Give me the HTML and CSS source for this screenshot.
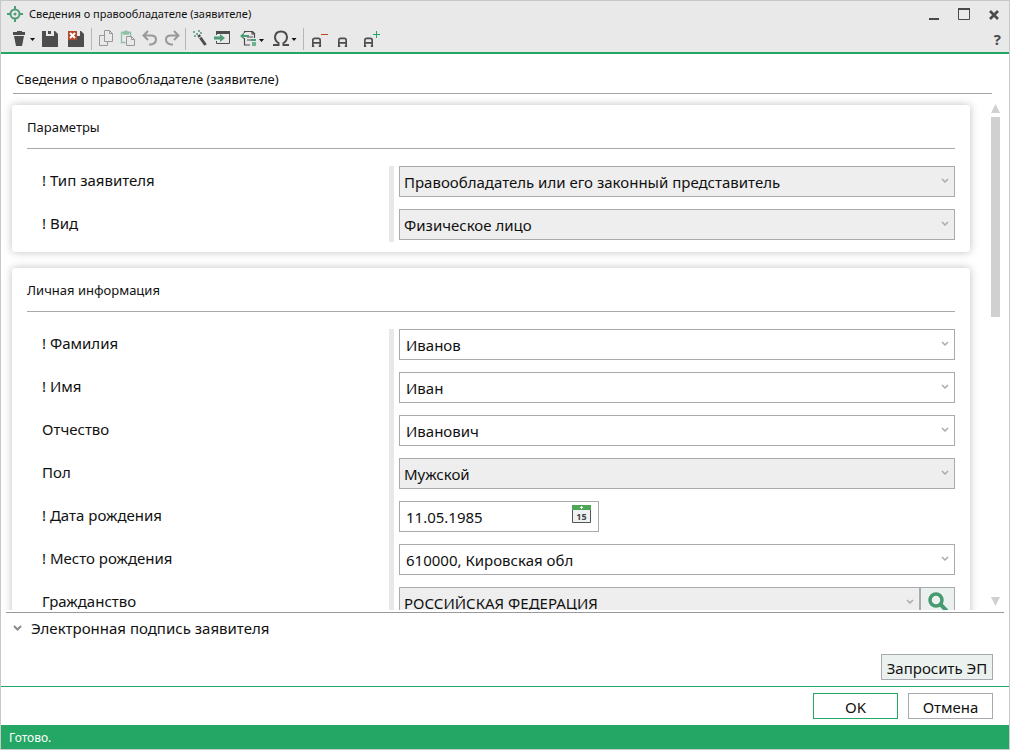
FILE: index.html
```html
<!doctype html>
<html lang="ru">
<head>
    <title>Сведения о правообладателе (заявителе)</title>
    <meta charset="utf-8">
    <meta name="viewport" content="width=device-width, initial-scale=1">
    <link rel="stylesheet" href="styles.css">
</head>
<body>

  <!-- shared icons -->
  <svg class="defs" width="0" height="0" aria-hidden="true">
    <symbol id="chevron" viewBox="0 0 8 6">
      <path d="M1 1l3 3 3-3" fill="none" stroke="currentColor" stroke-width="1.5"/>
    </symbol>
    <symbol id="letter-box" viewBox="0 0 12 12">
      <path d="M2 11V4q0-2 2-2h4q2 0 2 2v7M2 7h8M1 10.500h2.500M8.500 10.500H11" fill="none" stroke="#4d4d4d" stroke-width="1.800"/>
    </symbol>
  </svg>

  <div class="window">

    <!-- title bar -->
    <header class="header">
      <div class="titlebar">
        <svg class="logo" width="16" height="16" viewBox="0 0 16 16">
          <circle cx="8" cy="8" r="4.500" fill="none" stroke="#4f9c78" stroke-width="2"/>
          <path d="M8 0v4M8 12v4M0 8h4M12 8h4" stroke="#4f9c78" stroke-width="2"/>
          <circle cx="8" cy="8" r="1.500" fill="#4f9c78"/>
        </svg>
        <span class="titlebar-text">Сведения о правообладателе (заявителе)</span>
        <button class="icon-btn" aria-label="Свернуть">
          <svg width="12" height="14" viewBox="0 0 12 14"><path d="M1 12h10" stroke="#4a4a4a" stroke-width="2"/></svg>
        </button>
        <button class="icon-btn" aria-label="Развернуть">
          <svg width="12" height="14" viewBox="0 0 12 14"><path d="M0 2h12" stroke="#4a4a4a" stroke-width="2"/><path d="M.5 2v10.500h11V2" fill="none" stroke="#4a4a4a"/></svg>
        </button>
        <button class="icon-btn" aria-label="Закрыть">
          <svg width="12" height="14" viewBox="0 0 12 14"><path d="M2 4l8 8M10 4l-8 8" stroke="#4a4a4a" stroke-width="2.600"/></svg>
        </button>
      </div>

      <!-- toolbar -->
      <div class="toolbar">
        <button class="icon-btn" aria-label="Удалить">
          <svg width="23" height="18" viewBox="0 0 23 18"><path d="M5 1h5v1h3v3H1V2h4z" fill="#4d4d4d"/><path d="M2 6h10l-2 10H4z" fill="#4d4d4d"/><path d="M18 8h5l-2.500 3z" fill="#111"/></svg>
        </button>
        <button class="icon-btn" aria-label="Сохранить">
          <svg width="19" height="16" viewBox="0 0 19 16"><path d="M0 0h13l3 3v13H0z" fill="#4d4d4d"/><path d="M4 0h8v5H4z" fill="#e9e9e9"/><path d="M6 0h3v3H6z" fill="#4d4d4d"/></svg>
        </button>
        <button class="icon-btn" aria-label="Сохранить и закрыть">
          <svg width="16" height="16" viewBox="0 0 16 16"><path d="M0 0h13l3 3v13H0z" fill="#4d4d4d"/><path d="M9 0h3v5H9z" fill="#e9e9e9"/><path d="M0 0h9v9H0z" fill="#b7492b"/><path d="M2 2l5 5M7 2L2 7" stroke="#fff" stroke-width="2"/></svg>
        </button>
        <span class="separator"></span>
        <button class="icon-btn" aria-label="Копировать">
          <svg width="15" height="18" viewBox="0 0 15 18"><path d="M5.500.5h5l3 3v8h-8zM10.500.5v3h3" fill="#e9e9e9" stroke="#999"/><path d="M5 5.500H.5v10h8V12" fill="none" stroke="#999"/></svg>
        </button>
        <button class="icon-btn" aria-label="Вставить">
          <svg width="14" height="18" viewBox="0 0 14 18"><path d="M4.500 12.500h-4v-10h9V6M2.500 4V2h1.500q1-2 2 0H7.500v2z" fill="none" stroke="#8ec0a5" stroke-width="1.300"/><path d="M5.500 6.500h5l3 3v6h-8zM10.500 6.500v3h3" fill="#e9e9e9" stroke="#999"/></svg>
        </button>
        <button class="icon-btn" aria-label="Отменить">
          <svg width="15" height="18" viewBox="0 0 15 18"><path d="M6 1L1.500 5.500 6 10M2 5.500h7q5 0 5 4t-5 5H7" fill="none" stroke="#999" stroke-width="2"/></svg>
        </button>
        <button class="icon-btn" aria-label="Повторить">
          <svg width="14" height="18" viewBox="0 0 14 18"><path d="M10 1l4.500 4.500L10 10M14 5.500H7q-5 0-5 4t5 5h2" fill="none" stroke="#999" stroke-width="2"/></svg>
        </button>
        <span class="separator"></span>
        <button class="icon-btn" aria-label="Мастер">
          <svg width="14" height="18" viewBox="0 0 14 18"><path d="M5.500 5L12.500 15" stroke="#4d4d4d" stroke-width="3"/><path d="M6 8l3-2" stroke="#e9e9e9"/><path d="M0 2h2M3 4h2M5 1h2M1 6h2M7 3h2" stroke="#4f9c78" stroke-width="1.500"/></svg>
        </button>
        <button class="icon-btn" aria-label="Загрузить">
          <svg width="19" height="18" viewBox="0 0 19 18"><path d="M2.500 5V1.500h13v12h-13V11" fill="none" stroke="#4d4d4d"/><path d="M2 1h14v3H2z" fill="#4d4d4d"/><path d="M0 6.500h6V4l5 4-5 4V9.500H0z" fill="#4f9c78"/></svg>
        </button>
        <button class="icon-btn" aria-label="Импорт">
          <svg width="26" height="18" viewBox="0 0 26 18"><path d="M4.500 3V1.500h8l2 2V8M4.500 8v7H10M12 2v2h2M7 7h6M7 10h4" fill="none" stroke="#4d4d4d" stroke-width="1.200"/><path d="M0 6l4-3.500v2.500h5v2H4v2.500z" fill="#4f9c78"/><path d="M11 9h5v2h-5z" fill="#4f9c78"/><path d="M12 12h4v4h-4z" fill="#6fb48f"/><path d="M19 9h5l-2.500 3z" fill="#111"/></svg>
        </button>
        <button class="icon-btn" aria-label="Символ">
          <svg width="23" height="18" viewBox="0 0 23 18"><path d="M0 15h5.500v-2Q2 11 2 7 2.500 1.500 8 1.500T14 7Q14 11 10.500 13v2H16" fill="none" stroke="#4d4d4d" stroke-width="2"/><path d="M18.500 8h5L21 11z" fill="#111"/></svg>
        </button>
        <span class="separator"></span>
        <button class="icon-btn sized" aria-label="Уменьшить блок">
          <svg width="17" height="18" viewBox="0 0 17 18"><use href="#letter-box" y="6" width="11" height="12"/><path d="M10 4.500h7" stroke="#c0451f"/></svg>
        </button>
        <button class="icon-btn sized" aria-label="Блок">
          <svg width="17" height="18" viewBox="0 0 17 18"><use href="#letter-box" y="6" width="11" height="12"/></svg>
        </button>
        <button class="icon-btn sized" aria-label="Увеличить блок">
          <svg width="17" height="18" viewBox="0 0 17 18"><use href="#letter-box" y="6" width="11" height="12"/><path d="M10 4.500h7M13.500 1v7" stroke="#24a664"/></svg>
        </button>
        <button class="icon-btn help">?</button>
      </div>
    </header>

    <h1 class="page-title">Сведения о правообладателе (заявителе)</h1>

    <!-- form -->
    <main class="content">
      <div class="cards">

        <section class="card">
          <h2 class="card-title">Параметры</h2>
          <div class="row">
            <label class="label" for="type">! Тип заявителя</label>
            <div class="field gray">
              <select id="type"><option>Правообладатель или его законный представитель</option></select>
              <svg class="arrow"><use href="#chevron"/></svg>
            </div>
          </div>
          <div class="row">
            <label class="label" for="kind">! Вид</label>
            <div class="field gray">
              <select id="kind"><option>Физическое лицо</option></select>
              <svg class="arrow"><use href="#chevron"/></svg>
            </div>
          </div>
        </section>

        <section class="card">
          <h2 class="card-title">Личная информация</h2>
          <div class="row">
            <label class="label" for="surname">! Фамилия</label>
            <div class="field">
              <input type="text" id="surname" value="Иванов">
              <svg class="arrow"><use href="#chevron"/></svg>
            </div>
          </div>
          <div class="row">
            <label class="label" for="name">! Имя</label>
            <div class="field">
              <input type="text" id="name" value="Иван">
              <svg class="arrow"><use href="#chevron"/></svg>
            </div>
          </div>
          <div class="row">
            <label class="label" for="patronymic">Отчество</label>
            <div class="field">
              <input type="text" id="patronymic" value="Иванович">
              <svg class="arrow"><use href="#chevron"/></svg>
            </div>
          </div>
          <div class="row">
            <label class="label" for="gender">Пол</label>
            <div class="field gray">
              <select id="gender"><option>Мужской</option><option>Женский</option></select>
              <svg class="arrow"><use href="#chevron"/></svg>
            </div>
          </div>
          <div class="row">
            <label class="label" for="birthday">! Дата рождения</label>
            <div class="field date">
              <input type="text" id="birthday" value="11.05.1985">
              <button class="icon-btn calendar" aria-label="Выбрать дату">
                <svg width="19" height="18" viewBox="0 0 19 18">
                  <path d="M.5.5h18v17H.5z" fill="#eef2f3" stroke="#555"/>
                  <path d="M0 0h19v5H0z" fill="#4fa657"/>
                  <path d="M8 2.500h3M9.500 1v3" stroke="#fff"/>
                  <text x="9.500" y="15" text-anchor="middle" class="calendar-day">15</text>
                </svg>
              </button>
            </div>
          </div>
          <div class="row">
            <label class="label" for="birthplace">! Место рождения</label>
            <div class="field">
              <input type="text" id="birthplace" value="610000, Кировская обл">
              <svg class="arrow"><use href="#chevron"/></svg>
            </div>
          </div>
          <div class="row">
            <label class="label" for="citizenship">Гражданство</label>
            <div class="field-group">
              <div class="field gray">
                <select id="citizenship"><option>РОССИЙСКАЯ ФЕДЕРАЦИЯ</option></select>
                <svg class="arrow"><use href="#chevron"/></svg>
              </div>
              <button class="search" aria-label="Найти">
                <svg width="20" height="20" viewBox="0 0 20 20"><circle cx="8" cy="8" r="6" fill="none" stroke="#459a70" stroke-width="3.500"/><path d="M12 12l7 7" stroke="#459a70" stroke-width="4"/></svg>
              </button>
            </div>
          </div>
        </section>

      </div>

      <div class="scrollbar" aria-hidden="true">
        <svg width="9" height="9" viewBox="0 0 9 9"><path d="M4.500 0L9 9H0z" fill="#d0d0d0"/></svg>
        <div class="track"><div class="thumb"></div></div>
        <svg width="9" height="9" viewBox="0 0 9 9"><path d="M0 0h9L4.500 9z" fill="#d0d0d0"/></svg>
      </div>
    </main>

    <!-- signature -->
    <section class="signature">
      <button class="expander">
        <svg width="9" height="7" viewBox="0 0 9 7"><path d="M1 1l3.500 3.500L8 1" fill="none" stroke="#8a8a8a" stroke-width="2"/></svg>
        Электронная подпись заявителя
      </button>
      <button class="btn request">Запросить ЭП</button>
    </section>

    <div class="actions">
      <button class="btn ok">OK</button>
      <button class="btn">Отмена</button>
    </div>

    <footer class="status">Готово.</footer>
  </div>

</body>
</html>
```
FILE: styles.css
```css
* {
  box-sizing: border-box;
}
body {
  margin: 0;
  background-color: white;
  color: #111;
  font: 15px/20px 'Noto Sans', 'Open Sans', sans-serif;
}
button, input, select {
  font: inherit;
  color: inherit;
}
.defs {
  position: absolute;
}
.window {
  display: flex;
  flex-direction: column;
  height: 100vh;
  border: 1px solid #c8c8c8;
}

/* header */
.header {
  background-color: #e9e9e9;
  border-bottom: 2px solid #24a664;
}
.titlebar {
  display: flex;
  align-items: center;
  gap: 18px;
  height: 26px;
  padding: 0 9px 0 6px;
}
.logo {
  margin-right: -12px;
}
.titlebar-text {
  flex: 1;
  font-size: 11px;
}
.icon-btn {
  display: flex;
  align-items: center;
  padding: 0;
  border: none;
  background: none;
}
.icon-btn svg {
  overflow: visible;
}
.toolbar {
  display: flex;
  align-items: center;
  gap: 7px;
  height: 25px;
  padding: 0 8px 2px 11px;
}
.separator {
  width: 1px;
  height: 22px;
  background-color: #b4b6bc;
}
.sized {
  margin-right: 2px;
}
.help {
  margin-left: auto;
  color: #4a4a4a;
  font-size: 15px;
  font-weight: 700;
}
.page-title {
  margin: 0 17px 0 12px;
  padding: 15px 3px 4px;
  border-bottom: 1px solid #a5a5a5;
  font-size: 13px;
  font-weight: 400;
}

/* form */
.content {
  display: flex;
  flex: 1;
  min-height: 0;
  margin-bottom: 2px;
}
.cards {
  flex: 1;
  padding: 11px 21px 0 11px;
  overflow-y: auto;
  scrollbar-width: none;
}
.card {
  margin-bottom: 16px;
  padding: 0 15px 10px;
  border-radius: 3px;
  background-color: white;
  box-shadow: 0 0 8px rgba(0, 0, 0, .25);
}
.card-title {
  margin: 0 0 17px;
  padding: 12px 0 11px;
  border-bottom: 1px solid #a9a9a9;
  font-size: 13px;
  font-weight: 400;
}
.row {
  display: grid;
  grid-template-columns: 367fr 556fr;
  column-gap: 5px;
}
.label {
  height: 43px;
  padding: 4px 15px;
  border-right: 5px solid #e8e8e8;
}
.row:last-child .label {
  height: 33px;
}
.field {
  position: relative;
  height: 31px;
  border: 1px solid #a9a9b0;
}
.field input, .field select {
  width: 100%;
  height: 29px;
  padding: 0 24px 0 6px;
  border: none;
  background: none;
  appearance: none;
}
.field select {
  padding-left: 4px;
}
.gray {
  background-color: #eee;
}
.arrow {
  position: absolute;
  top: 11px;
  right: 5px;
  width: 8px;
  height: 6px;
  color: #a9a9b0;
  pointer-events: none;
}
.date {
  display: flex;
  width: 200px;
}
.calendar {
  padding: 0 7px 5px 0;
}
.calendar-day {
  font: 700 9px 'Noto Sans', sans-serif;
  fill: #444;
}
.field-group {
  display: flex;
}
.field-group .field {
  flex: 1;
}
.search {
  width: 35px;
  height: 31px;
  padding: 4px 6px;
  border: 1px solid #a9a9b0;
  background-color: #ebf1ef;
}
.scrollbar {
  display: flex;
  flex-direction: column;
  gap: 4px;
  margin-right: 9px;
  padding: 10px 0 4px;
}
.track {
  flex: 1;
}
.thumb {
  height: 42%;
  background-color: #d0d0d0;
}

/* bottom */
.signature {
  display: flex;
  flex-direction: column;
  align-items: flex-start;
  margin: 0 5px;
  padding: 5px 11px 6px;
  border-top: 1px solid #999;
}
.expander {
  display: flex;
  align-items: center;
  gap: 9px;
  padding: 0 0 16px 1px;
  border: none;
  background: none;
}
.expander svg {
  margin-left: -5px;
}
.btn {
  width: 85px;
  height: 26px;
  padding: 2px 0 0;
  border: 1px solid #a9a9b0;
  background-color: white;
}
.request {
  align-self: flex-end;
  width: 112px;
  background-color: #ebf1ef;
}
.ok {
  border-color: #24a664;
}
.actions {
  display: flex;
  justify-content: flex-end;
  gap: 10px;
  padding: 6px 16px;
  border-top: 1px solid #24a664;
}
.status {
  height: 24px;
  padding: 3px 8px 0;
  background-color: #24a664;
  color: white;
  font-size: 12px;
}
```
